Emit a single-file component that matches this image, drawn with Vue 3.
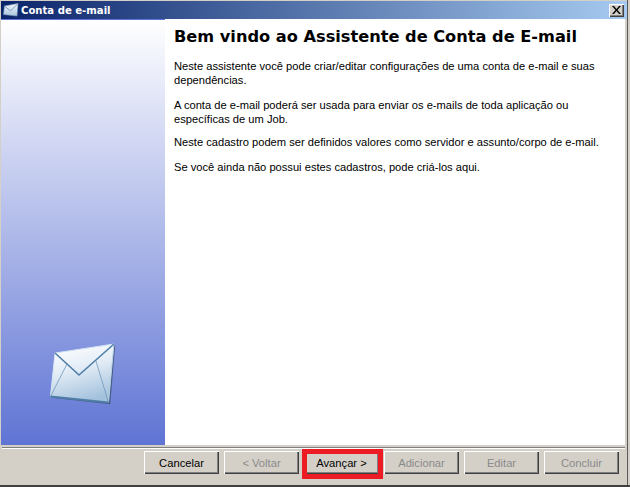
<script setup>
const paragraphs = [
  { text: 'Neste assistente você pode criar/editar configurações de uma conta de e-mail e suas dependências.', cls: 'gap-l' },
  { text: 'A conta de e-mail poderá ser usada para enviar os e-mails de toda aplicação ou específicas de um Job.', cls: 'gap-s' },
  { text: 'Neste cadastro podem ser definidos valores como servidor e assunto/corpo de e-mail.', cls: 'gap-l' },
  { text: 'Se você ainda não possui estes cadastros, pode criá-los aqui.', cls: '' }
]
const buttons = [
  { label: 'Cancelar', disabled: false },
  { label: '< Voltar', disabled: true },
  { label: 'Avançar >', disabled: false, marked: true },
  { label: 'Adicionar', disabled: true },
  { label: 'Editar', disabled: true },
  { label: 'Concluir', disabled: true }
]
</script>

<template>
  <div class="window">
    <header class="titlebar">
      <svg class="title-icon" width="16" height="14" viewBox="0 0 16 14">
        <defs>
          <linearGradient id="tm" x1="0" y1="0" x2="0" y2="1">
            <stop offset="0" stop-color="#f4f8fc" />
            <stop offset="1" stop-color="#a9c4de" />
          </linearGradient>
        </defs>
        <path d="M1.5 3 L15 .5 L14 13 L.5 11.5 Z" fill="url(#tm)" stroke="#7d9cbc" stroke-width=".6" />
        <path d="M1.5 3 L7.5 8 L15 .5" fill="none" stroke="#6f8fb0" stroke-width=".8" />
      </svg>
      <span class="title-text">Conta de e-mail</span>
      <button class="close" aria-label="Fechar">
        <svg width="9" height="8" viewBox="0 0 9 8">
          <path d="M0 0 H2 L4.500 3 L7 0 H9 L5.500 4 L9 8 H7 L4.500 5 L2 8 H0 L3.500 4 Z" fill="#000" />
        </svg>
      </button>
    </header>

    <div class="main">
      <aside class="side">
        <svg class="envelope" width="68" height="64" viewBox="0 0 68 64">
          <defs>
            <linearGradient id="env" x1="0.2" y1="0" x2="0.5" y2="1">
              <stop offset="0" stop-color="#ffffff" />
              <stop offset="0.45" stop-color="#e2ecf6" />
              <stop offset="1" stop-color="#a3c1dc" />
            </linearGradient>
          </defs>
          <path d="M7 11 L66 2 L61 61 L2.500 54.500 Z" fill="#3d5478" opacity=".85" transform="translate(1.200 1.200)" />
          <path d="M7 11 L66 2 L60.500 60.500 L2.500 54.500 Z" fill="url(#env)" />
          <path d="M7 11 L66 2" fill="none" stroke="#cfe2f2" stroke-width="1.200" />
          <path d="M66 2 L60.500 60.500" fill="none" stroke="#b9d3e8" stroke-width="1" />
          <path d="M7 11 L2.500 54.500" fill="none" stroke="#d7e6f3" stroke-width="1" />
          <path d="M7 11 L31 33 L66 2" fill="none" stroke="#4f7ea6" stroke-width="1.600" />
          <path d="M19 22 L2.500 54.500" fill="none" stroke="#6f98ba" stroke-width=".8" />
          <path d="M48 19 L60.500 60.500" fill="none" stroke="#6f98ba" stroke-width=".8" />
          <path d="M2.500 54.500 L60.500 60.500" fill="none" stroke="#4e7ea6" stroke-width="1.800" />
        </svg>
      </aside>
      <section class="content">
        <h1>Bem vindo ao Assistente de Conta de E-mail</h1>
        <p v-for="p in paragraphs" :key="p.text" :class="p.cls">{{ p.text }}</p>
      </section>
    </div>

    <footer class="footer">
      <div class="actions">
        <button
          v-for="b in buttons"
          :key="b.label"
          class="btn"
          :class="{ off: b.disabled, marked: b.marked }"
        >{{ b.label }}</button>
      </div>
    </footer>
  </div>
</template>

<style>
html, body { margin: 0; padding: 0; background: #d4d0c8; }
</style>

<style scoped>
.window {
  position: relative;
  box-sizing: border-box;
  width: 630px;
  height: 487px;
  display: flex;
  flex-direction: column;
  background: #d4d0c8;
  font-family: "Liberation Sans", Arial, sans-serif;
  font-size: 11.15px;
  color: #000;
  padding: 1px 3px 0 1px;
  border-bottom: 2px solid #404040;
  overflow: hidden;
}
.window::after {
  content: "";
  position: absolute;
  top: 0;
  right: 2px;
  bottom: 0;
  width: 1px;
  background: #5a5a5a;
}
.titlebar {
  height: 18px;
  flex: none;
  display: flex;
  align-items: center;
  background: linear-gradient(90deg, #0a246a 0%, #a6caf0 100%);
  padding: 0 3px 0 2px;
}
.title-icon { flex: none; margin-right: 1px; }
.title-text {
  font-family: "DejaVu Sans", sans-serif;
  font-weight: 700;
  font-size: 10.1px;
  color: #fff;
  margin-left: 1px;
}
.close {
  margin-left: auto;
  width: 15px;
  height: 13px;
  padding: 0;
  border: 0;
  display: flex;
  align-items: center;
  justify-content: center;
  background: #d4d0c8;
  box-shadow: inset 1px 1px 0 #fff, inset -1px -1px 0 #404040, inset -2px -2px 0 #808080;
}
.main {
  flex: none;
  height: 426px;
  display: flex;
  margin-right: 2px;
  background: #fff;
}
.side {
  width: 164px;
  flex: none;
  box-sizing: border-box;
  border-top: 1px solid #5f74d4;
  background: linear-gradient(180deg, #ffffff 0%, #5f74d4 100%);
  display: flex;
  align-items: flex-end;
  padding: 0 0 39px 47px;
}
.envelope { display: block; }
.content {
  flex: 1;
  padding: 8px 20px 0 9px;
}
h1 {
  margin: 0 0 12px;
  font-family: "DejaVu Sans", sans-serif;
  font-size: 16.2px;
  line-height: 20px;
  font-weight: 700;
}
p {
  margin: 0 0 11px;
  line-height: 14px;
  width: 440px;
}
p.gap-s { margin-bottom: 9px; }
.footer {
  flex: 1;
  box-sizing: border-box;
  margin-top: 2px;
  border-top: 1px solid #808080;
  box-shadow: inset 0 1px 0 #fff;
  margin-left: 1px;
  margin-right: 2px;
}
.actions {
  display: flex;
  justify-content: flex-end;
  gap: 5px;
  padding: 3px 6px 0 0;
}
.btn {
  position: relative;
  width: 75px;
  height: 23px;
  padding: 0;
  border: 0;
  background: #d4d0c8;
  font: 11.2px "Liberation Sans", Arial, sans-serif;
  color: #000;
  box-shadow: inset 1px 1px 0 #fff, inset -1px -1px 0 #404040, inset -2px -2px 0 #808080;
}
.btn.off { color: #8a8a8a; }
.btn.marked::after {
  content: "";
  position: absolute;
  left: -2px;
  top: -2px;
  width: 71px;
  height: 20px;
  border: 5px solid #ed1c24;
}
</style>
